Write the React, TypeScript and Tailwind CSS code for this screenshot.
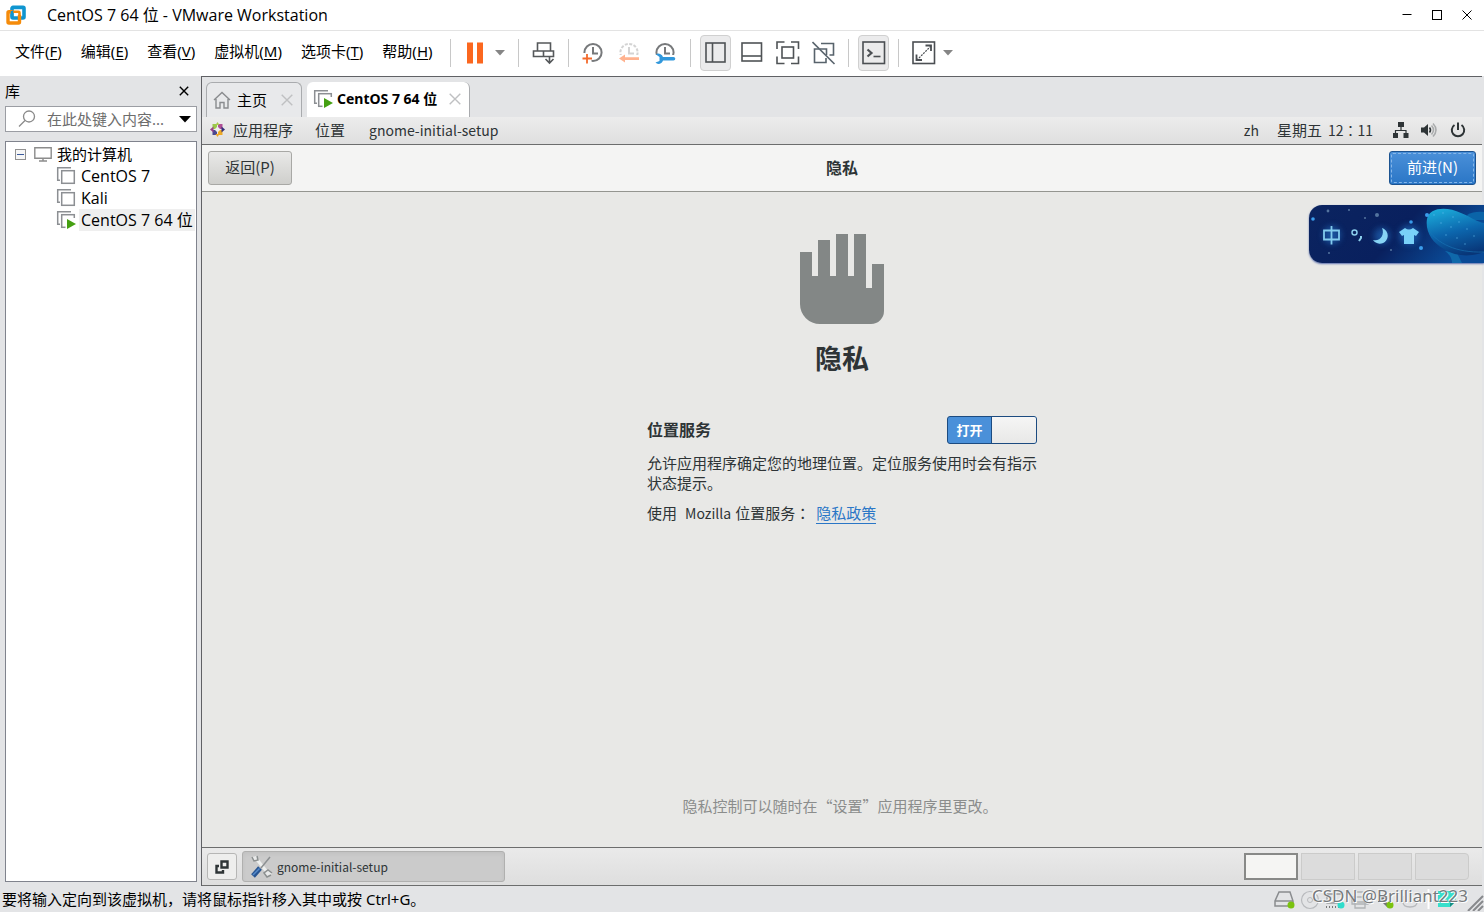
import React, { useState } from "react";

const VmIcon = ({ running = false }: { running?: boolean }) => (
  <svg width="20" height="20" viewBox="0 0 20 20" fill="none" className="shrink-0" aria-hidden="true">
    <path d="M1.7 15V1.7H15M1 14.3h3" stroke="#8c8f93" strokeWidth="1.5" />
    <rect x="5.7" y="4.7" width="12.6" height="12.6" stroke="#8c8f93" strokeWidth="1.5" fill="#fff" />
    {running && (
      <>
        <path d="M9.5 8v12H20V8z" fill="#fff" />
        <path d="M11 9l9 5-9 5z" fill="#45a012" />
      </>
    )}
  </svg>
);

const Caret = () => (
  <svg width="10" height="6" viewBox="0 0 10 6" aria-hidden="true">
    <path d="M0 0h10L5 5.5z" fill="#858585" />
  </svg>
);

const CloseX = ({ color }: { color: string }) => (
  <svg width="12" height="12" viewBox="0 0 12 12" aria-hidden="true">
    <path d="M.7.7l10.6 10.6M11.3.7L.7 11.3" stroke={color} strokeWidth="1.4" />
  </svg>
);

const Separator = () => <span className="h-7 w-px shrink-0 bg-[#c8c8c8]" />;

const menus = [
  ["文件", "F"],
  ["编辑", "E"],
  ["查看", "V"],
  ["虚拟机", "M"],
  ["选项卡", "T"],
  ["帮助", "H"],
];

const ToolButton = ({ label, active = false, children }: { label: string; active?: boolean; children: React.ReactNode }) => (
  <button
    type="button"
    aria-label={label}
    className={
      active
        ? "flex h-9 w-[31px] shrink-0 items-center justify-center rounded border border-[#d0d0d0] bg-[#ebebec]"
        : "flex h-9 w-[31px] shrink-0 items-center justify-center"
    }
  >
    {children}
  </button>
);

const Clock = ({ color, dashed = false }: { color: string; dashed?: boolean }) => (
  <>
    <circle cx="12" cy="11.5" r="8.6" stroke={color} strokeWidth="2" strokeDasharray={dashed ? "3 1.5" : undefined} />
    <path d="M12 6v6.5H17" stroke={color} strokeWidth="2" />
  </>
);

function TitleBar() {
  return (
    <header className="flex h-[31px] shrink-0 items-center border-b border-[#e3e3e3] bg-white">
      <svg width="22" height="22" viewBox="0 0 22 22" fill="none" className="ml-[5px]" aria-hidden="true">
        <path d="M8 3.400h10a1 1 0 011 1V13a1 1 0 01-1 1H8a1 1 0 01-1-1V4.400a1 1 0 011-1z" stroke="#0f95d0" strokeWidth="3.600" />
        <path d="M7 7.700H4a1 1 0 00-1 1V18a1 1 0 001 1h9.500a1 1 0 001-1v-7" stroke="#f58b0a" strokeWidth="3.400" />
        <path d="M7 7.700h6.500a1 1 0 011 1v3" stroke="#f58b0a" strokeWidth="2.600" />
        <path d="M7 7v6" stroke="#0f95d0" strokeWidth="2.600" />
      </svg>
      <h1 className="ml-5 flex-1 font-['Open_Sans','Noto_Sans_CJK_SC',sans-serif] text-[16px] leading-5">CentOS 7 64 位 - VMware Workstation</h1>
      <button type="button" aria-label="最小化" className="flex h-6 w-[30px] items-center justify-center">
        <svg width="10" height="10" viewBox="0 0 10 10"><path d="M.5 4.500h9" stroke="#000" /></svg>
      </button>
      <button type="button" aria-label="最大化" className="flex h-6 w-[30px] items-center justify-center">
        <svg width="10" height="10" viewBox="0 0 10 10" fill="none"><rect x=".5" y=".5" width="9" height="9" stroke="#000" /></svg>
      </button>
      <button type="button" aria-label="关闭" className="mr-[2px] flex h-6 w-[30px] items-center justify-center">
        <svg width="10" height="10" viewBox="0 0 10 10"><path d="M.5.5l9 9M9.500.5l-9 9" stroke="#000" /></svg>
      </button>
    </header>
  );
}

function MenuBar() {
  const frame = "#4f5356";
  return (
    <div className="flex h-[45px] shrink-0 items-center bg-white pb-[2px]">
      <nav className="flex min-w-[450px] shrink-0 gap-[19px] pb-1 pl-[15px] text-[15px] leading-5">
        {menus.map(([name, key]) => (
          <button type="button" key={name} className="whitespace-nowrap">
            {name}(<u className="underline-offset-2">{key}</u>)
          </button>
        ))}
      </nav>
      <Separator />
      <div className="flex items-center gap-[5px] pr-[10px] pl-3">
        <button type="button" aria-label="暂停" className="flex w-6 justify-center">
          <svg width="18" height="22" viewBox="0 0 18 22"><path d="M1 0.500h6v21H1zM11 .5h6v21h-6z" fill="#fb671f" /></svg>
        </button>
        <button type="button" aria-label="电源选项" className="flex w-4 justify-center"><Caret /></button>
      </div>
      <Separator />
      <div className="flex px-[9px]">
        <ToolButton label="发送 Ctrl+Alt+Del">
          <svg width="24" height="24" viewBox="0 0 24 24" fill="none" stroke="#55585a" strokeWidth="1.600">
            <path d="M5.500 2h13v8h-13zM1.500 10h10v5.500h-10zM11.500 10h10v5.500h-10zM17.500 15v7M13.500 18l4 4 4-4" />
          </svg>
        </ToolButton>
      </div>
      <Separator />
      <div className="flex items-center gap-3 pr-[13px] pl-3">
        <button type="button" aria-label="拍摄快照">
          <svg width="24" height="24" viewBox="0 0 24 24" fill="none">
            <Clock color="#77797b" />
            <path d="M1 12h9.500v11H1z" fill="#fff" />
            <path d="M6 13v9.500M1.500 17.500h9.500" stroke="#f36a2c" strokeWidth="1.800" />
          </svg>
        </button>
        <button type="button" aria-label="恢复快照">
          <svg width="24" height="24" viewBox="0 0 24 24" fill="none">
            <Clock color="#d3d3d3" dashed />
            <path d="M0 14h24v10H0z" fill="#fff" />
            <path d="M2 17.500l6-4v2.700h14v2.800H8v2.500z" fill="#ffb28f" />
          </svg>
        </button>
        <button type="button" aria-label="管理快照">
          <svg width="24" height="24" viewBox="0 0 24 24" fill="none">
            <Clock color="#77797b" />
            <path d="M0 14h24v10H0z" fill="#fff" />
            <path d="M3 13.500a4.500 4.500 0 017 2.500h10.500a1.800 1.800 0 010 3.600H10a4.500 4.500 0 01-7.500 2l4-1.500v-4.200z" fill="#3198dc" />
          </svg>
        </button>
      </div>
      <Separator />
      <div className="flex gap-[5px] px-[9px]">
        <ToolButton label="显示库" active>
          <svg width="22" height="22" viewBox="0 0 22 22" fill="none" stroke={frame} strokeWidth="1.600"><rect x="1" y="1" width="19" height="19" /><path d="M7.500 1v19" /></svg>
        </ToolButton>
        <ToolButton label="显示缩略图栏">
          <svg width="22" height="22" viewBox="0 0 22 22" fill="none" stroke={frame} strokeWidth="1.600"><rect x="1" y="1" width="19.500" height="18" /><path d="M1 14h19" /></svg>
        </ToolButton>
        <ToolButton label="全屏">
          <svg width="24" height="24" viewBox="0 0 24 24" fill="none" stroke={frame} strokeWidth="1.600"><rect x="6" y="6" width="11.500" height="11" /><path d="M8.500 1H1v7M15 1h7.500v7M1 15.500v7h7.500M15 22.500h7.500v-7" /></svg>
        </ToolButton>
        <ToolButton label="Unity 模式">
          <svg width="24" height="24" viewBox="0 0 24 24" fill="none" stroke="#58636c" strokeWidth="1.600"><path d="M9 2.500h12.500V14h-4M7 8H2.500v13.500H14V17M8 8h6.500v6" /><path d="M.5 1l22 22" /></svg>
        </ToolButton>
      </div>
      <Separator />
      <div className="flex px-[9px]">
        <ToolButton label="控制台视图" active>
          <svg width="24" height="24" viewBox="0 0 24 24" fill="none" stroke="#4b4f53" strokeWidth="1.600"><rect x="1" y="1" width="21.500" height="21.500" /><path d="M5.500 8.500l4 3.500-4 3.500" strokeWidth="2.200" /><path d="M11.500 15.500h7" /></svg>
        </ToolButton>
      </div>
      <Separator />
      <div className="flex items-center pl-[9px]">
        <ToolButton label="拉伸客户机">
          <svg width="24" height="24" viewBox="0 0 24 24" fill="none" stroke="#4b4f53" strokeWidth="1.600"><rect x="1" y="1" width="21.500" height="21.500" /><path d="M13.500 4.500h5.500V10M4.500 13.500v5.500H10" strokeWidth="1.800" /><path d="M19 5L5 19" strokeWidth="1.200" strokeDasharray="2 1" /></svg>
        </ToolButton>
        <button type="button" aria-label="拉伸选项" className="flex w-[18px] justify-center"><Caret /></button>
      </div>
    </div>
  );
}

function Sidebar() {
  return (
    <aside className="flex w-[201px] shrink-0 flex-col bg-[#e3e4e6] pr-1 pl-[5px] text-[15px]">
      <div className="flex h-[30px] items-center justify-between pr-2">
        <h2 className="leading-5">库</h2>
        <button type="button" aria-label="关闭库">
          <svg width="10" height="10" viewBox="0 0 10 10"><path d="M.8.8l8.400 8.400M9.200.8L.8 9.200" stroke="#000" strokeWidth="1.400" /></svg>
        </button>
      </div>
      <div className="flex h-[26px] items-center border border-[#9b9da3] bg-white">
        <svg width="18" height="18" viewBox="0 0 18 18" fill="none" stroke="#8a8a8a" strokeWidth="1.300" className="ml-3 shrink-0"><circle cx="11" cy="6.500" r="5.500" /><path d="M7 10.500L1 16.500" /></svg>
        <input type="text" aria-label="搜索" placeholder="在此处键入内容..." className="ml-[11px] min-w-0 flex-1 bg-transparent leading-5 outline-none placeholder:text-[#6d6d6d]" />
        <button type="button" aria-label="搜索选项" className="mr-[5px]">
          <svg width="12" height="7" viewBox="0 0 12 7"><path d="M0 0h12L6 6.500z" /></svg>
        </button>
      </div>
      <div className="mt-[9px] mb-1 flex-1 border border-[#80838d] bg-white pt-px">
        <div className="flex h-[22px] items-center pl-[9px]">
          <button type="button" aria-label="折叠" className="flex size-[11px] items-center justify-center border border-[#919191] bg-[#f6f6f6]">
            <span className="h-px w-[7px] bg-[#3a5a9c]" />
          </button>
          <svg width="18" height="15" viewBox="0 0 18 15" fill="none" stroke="#8c8c8c" strokeWidth="1.400" className="mr-[5px] ml-2"><path d="M.8.8h16.400v10.400H.8zM9 11v2.500M5 14h8" /></svg>
          我的计算机
        </div>
        <ul>
          {["CentOS 7", "Kali", "CentOS 7 64 位"].map((name, i) => (
            <li key={name}>
              <button type="button" className="flex h-[22px] items-center pl-[50px] font-['Open_Sans','Noto_Sans_CJK_SC',sans-serif] text-[16px] whitespace-nowrap">
                <VmIcon running={i === 2} />
                <span className={i === 2 ? "ml-[3px] bg-[#efefef] px-[2px] leading-[22px]" : "ml-[3px] px-[2px] leading-[22px]"}>{name}</span>
              </button>
            </li>
          ))}
        </ul>
      </div>
    </aside>
  );
}

function Tabs() {
  return (
    <div className="flex h-10 shrink-0 items-end gap-[5px] bg-[#e3e4e6] pl-1">
      <div className="flex h-[35px] w-24 items-center rounded-t-md border border-b-0 border-[#a9abae] bg-[#e8e9eb] pr-2 pb-px pl-[6px]">
        <svg width="18" height="18" viewBox="0 0 18 18" fill="none" stroke="#898b8e" strokeWidth="1.400"><path d="M1 9l8-7.500L17 9M3 8v9h4v-5.500h4V17h4V8" /></svg>
        <button type="button" className="ml-[6px] flex-1 text-left text-[15px] leading-5">主页</button>
        <button type="button" aria-label="关闭主页"><CloseX color="#bfc0c2" /></button>
      </div>
      <div className="flex h-[35px] w-[163px] items-center rounded-t-md border-r border-[#a9abae] bg-white pr-2 pb-px pl-[6px]">
        <VmIcon running />
        <button type="button" className="ml-1 flex-1 text-left text-[14px] leading-5 font-bold whitespace-nowrap">CentOS 7 64 位</button>
        <button type="button" aria-label="关闭 CentOS 7 64 位"><CloseX color="#bfc0c2" /></button>
      </div>
    </div>
  );
}

function GuestTopBar() {
  return (
    <div className="flex h-7 shrink-0 items-center border-b border-[#6c6d6d] bg-linear-to-b from-[#ececec] to-[#dfdfdf] pb-[2px] pl-2 text-[15px] leading-5 text-[#2e3436]">
      <svg width="15" height="15" viewBox="0 0 15 15" aria-hidden="true">
        <path d="M2.500 2H7v5H2.500z" fill="#9ac84a" /><path d="M8 2h4.500v5H8z" fill="#b04e96" />
        <path d="M8 8h4.500v5H8z" fill="#efaa25" /><path d="M2.500 8H7v5H2.500z" fill="#4a4890" />
        <path d="M0 7.500L3.500 4.500v6z" fill="#9b3f8b" /><path d="M7.500 0l2 3h-4z" fill="#a9c94e" /><path d="M15 7.500l-3.500-3v6z" fill="#35307b" />
        <path d="M7.500 15l-2-3h4z" fill="#eda629" /><path d="M7.500 4.500l3 3-3 3-3-3z" fill="#eee" />
      </svg>
      <button type="button" className="ml-2">应用程序</button>
      <button type="button" className="ml-[22px]">位置</button>
      <button type="button" className="ml-6 text-[14px]">gnome-initial-setup</button>
      <div className="ml-auto flex items-center pr-4">
        <button type="button" className="text-[14px]">zh</button>
        <button type="button" className="mr-5 ml-[18px] flex gap-[6px] whitespace-nowrap">
          <span>星期五</span>
          <span className="font-['Noto_Sans_CJK_TC',sans-serif] text-[14px]">12：11</span>
        </button>
        <svg width="16" height="16" viewBox="0 0 16 16" fill="#2e3436"><path d="M5 0h6v5H5zM0 11h5v5H0zM10.500 11h5v5h-5z" /><path d="M8 5v4M2.500 11V8.500h10.500V11" stroke="#2e3436" fill="none" strokeWidth="1.200" /></svg>
        <svg width="16" height="16" viewBox="0 0 16 16" fill="none" className="ml-3"><path d="M0 5.500h3L7 2v12l-4-3.500H0z" fill="#2e3436" /><path d="M8.500 5.500q2 2.500 0 5" stroke="#2e3436" strokeWidth="1.600" /><path d="M10.500 3.500q4 4.500 0 9M12 1.500q6 6.500 0 13" stroke="#a9abac" strokeWidth="1.500" /></svg>
        <svg width="16" height="16" viewBox="0 0 16 16" fill="none" stroke="#2e3436" strokeWidth="2" className="ml-[13px]"><path d="M4.500 3a6.200 6.200 0 107 0M8 0.500V8" /></svg>
      </div>
    </div>
  );
}

function PrivacyPage() {
  const [located, setLocated] = useState(true);
  return (
    <main className="flex flex-1 flex-col bg-[#e8e8e6] text-[15px] leading-5 text-[#2e3436]">
      <div className="grid h-[47px] shrink-0 grid-cols-3 items-center border-b border-[#949590] bg-[#f4f4f3] px-[6px]">
        <button type="button" className="h-[34px] w-[84px] justify-self-start rounded-[3px] border border-[#a8a8a5] bg-linear-to-b from-[#e9e9e8] to-[#cfcfcc] pb-[2px]">返回(P)</button>
        <h2 className="justify-self-center pb-[2px] text-[16px] font-bold">隐私</h2>
        <button type="button" className="h-[34px] w-[87px] justify-self-end rounded-[3px] border border-[#1c5390] bg-linear-to-b from-[#4a90d9] to-[#2a76c6] p-px text-white">
          <span className="flex h-full items-center justify-center rounded-xs border border-dashed border-[#86b6e8] pb-[2px]">前进(N)</span>
        </button>
      </div>
      <section className="mx-auto mt-[42px] flex w-full max-w-[390px] flex-col">
        <svg width="86" height="90" viewBox="0 0 86 90" className="mx-auto" aria-hidden="true">
          <path d="M1 18h12v24h6V6h12v36h6V0h12v42h6V0h12v54h6V30h12v47a13 13 0 01-13 13H21A20 20 0 011 70z" fill="#838786" />
        </svg>
        <h1 className="mt-[14px] text-center text-[27px] leading-10 font-bold">隐私</h1>
        <div className="mt-[38px] flex h-7 items-center justify-between">
          <span id="location-label" className="pb-[2px] text-[16px] font-bold">位置服务</span>
          <button type="button" role="switch" aria-checked={located} aria-labelledby="location-label" onClick={() => setLocated(!located)} className="flex h-7 w-[90px] overflow-hidden rounded-[3px] border border-[#1c4b80] bg-[#4a90d9] text-[13px] font-bold text-white">
            <span className="flex h-full flex-1 items-center justify-center">打开</span>
            <span className="h-full w-[45px] border-l border-[#1c4b80] bg-linear-to-b from-[#f5f5f5] to-[#e8e8e7]" />
          </button>
        </div>
        <p className="mt-[9px] leading-5">允许应用程序确定您的地理位置。定位服务使用时会有指示状态提示。</p>
        <p className="mt-[10px] flex whitespace-nowrap">
          <span>使用</span>
          <span className="mr-1 ml-2 text-[14px]">Mozilla</span>
          <span>位置服务</span>
          <span className="font-['Noto_Sans_CJK_TC',sans-serif]">：</span>
          <a href="#privacy" className="ml-[6px] border-b border-[#2a76c6] leading-5 text-[#2a76c6]">隐私政策</a>
        </p>
      </section>
      <p className="mt-auto mb-[31px] pr-1 text-center text-[#8b8d8c]">隐私控制可以随时在“设置”应用程序里更改。</p>
    </main>
  );
}

function GuestTaskBar() {
  return (
    <div className="flex h-[39px] shrink-0 items-center border-y border-[#6c6d6d] bg-linear-to-b from-[#eaeaea] to-[#dedede] pl-[5px] text-[#2e3436]">
      <button type="button" aria-label="显示桌面" className="flex h-[27px] w-[30px] items-center justify-center rounded-[3px] border border-[#b6b6b5] bg-[#eeeeed]">
        <svg width="14" height="14" viewBox="0 0 14 14" fill="none" stroke="#2e3436" strokeWidth="2.400"><path d="M6.500 1.500h6v6h-6zM4 6H1.500v6.500H8V10" /></svg>
      </button>
      <button type="button" className="ml-[5px] flex h-[31px] w-[263px] items-center rounded-[3px] border border-[#b0b0af] bg-[#cbcbcb] pl-[7px] text-[12px] leading-5 shadow-inner">
        <svg width="23" height="23" viewBox="0 0 23 23" fill="none">
          <path d="M5 2l12 15" stroke="#eef0ef" strokeWidth="3" /><path d="M2 2l2 4 4-1-1-4M21 20l-4 2-3-4 4-3 4 3" stroke="#8c9090" strokeWidth="1.500" fill="#e9eaea" />
          <path d="M20 2l-9 11" stroke="#8c9092" strokeWidth="1.500" /><path d="M10 13l-7 8" stroke="#285592" strokeWidth="5" /><path d="M9.500 13.500L3 20" stroke="#568ccc" strokeWidth="1.500" />
        </svg>
        <span className="ml-1">gnome-initial-setup</span>
      </button>
      <div className="ml-auto flex gap-[3px] pr-[13px]">
        <button type="button" aria-label="工作区 1" className="h-[27px] w-[54px] border-2 border-[#888987] bg-[#f5f5f3]" />
        <button type="button" aria-label="工作区 2" className="h-[27px] w-[54px] border border-[#cbcbca] bg-[#dcdcdc]" />
        <button type="button" aria-label="工作区 3" className="h-[27px] w-[54px] border border-[#cbcbca] bg-[#dcdcdc]" />
        <button type="button" aria-label="工作区 4" className="h-[27px] w-[54px] rounded-r border border-[#cbcbca] bg-[#dcdcdc]" />
      </div>
    </div>
  );
}

function StatusBar() {
  return (
    <footer className="relative flex h-[26px] shrink-0 items-center justify-between bg-[#e3e4e6] pl-[2px]">
      <p className="text-[15px] leading-5">要将输入定向到该虚拟机，请将鼠标指针移入其中或按 Ctrl+G。</p>
      <svg width="212" height="24" viewBox="0 0 212 24" fill="none" aria-hidden="true">
        <path d="M7 5h11l3 9v5H3v-5zM3 14h18" stroke="#8a8c8f" strokeWidth="1.500" />
        <circle cx="19" cy="18" r="3.500" fill="#7ac20f" />
        <circle cx="38" cy="13" r="8.500" stroke="#b8babd" strokeWidth="1.200" /><circle cx="38" cy="13" r="2.500" stroke="#b8babd" />
        <path d="M55 7h15v9H55z" stroke="#9a9c9f" strokeWidth="1.300" /><path d="M54 20h16" stroke="#777" strokeDasharray="1 2" strokeWidth="2" />
        <circle cx="69" cy="18" r="3.500" fill="#2fdccb" />
        <path d="M83 10V5h10v5M80 10h16v7H80zM83 15h10v6H83z" stroke="#b0b2b5" strokeWidth="1.300" />
        <path d="M106 10h4l5-5v15l-5-5h-4z" fill="#727477" /><circle cx="118" cy="18" r="3.500" fill="#7ac20f" />
        <path d="M131 9v6q0 5 7 5t7-5V9" stroke="#b7b9bc" strokeWidth="1.400" />
        <path d="M156.500 2v20" stroke="#fff" strokeWidth="2" />
        <path d="M166 4h18v10l-6 6h-12z" fill="#37dfcb" /><path d="M184 14h-6v6z" fill="#168e83" />
        <path d="M196 24l15-15M201 24l10-10M206 24l5-5" stroke="#87898c" strokeWidth="2" />
      </svg>
      <span className="absolute top-0 right-4 text-[17px] leading-5 text-[#777a7d] [text-shadow:1px_1px_0_#fff,-1px_-1px_0_#f4f4f4]">CSDN @Brilliant223</span>
    </footer>
  );
}

function ImeBar() {
  return (
    <div className="absolute top-[205px] right-0 overflow-hidden rounded-l-[13px] shadow-[0_1px_2px_#5b6fae]">
      <svg width="175" height="58" viewBox="0 0 175 58" aria-label="输入法">
        <defs>
          <linearGradient id="sea" x1="0" x2="1" y2="0.300"><stop stopColor="#0b2460" /><stop offset=".6" stopColor="#09205e" /><stop offset="1" stopColor="#0a4a96" /></linearGradient>
          <linearGradient id="whale" x1="0.300" y1="0" x2=".6" y2="1"><stop stopColor="#1ba9d8" /><stop offset=".5" stopColor="#0c66ad" /><stop offset="1" stopColor="#083678" /></linearGradient>
          <filter id="glow" x="-50%" y="-50%" width="200%" height="200%"><feGaussianBlur stdDeviation="3" /></filter>
        </defs>
        <path d="M0 0h175v58H0z" fill="url(#sea)" />
        <path d="M158 10q7-4 17-3v8h-14z" fill="#0a64a8" />
        <path d="M136 46l12 2 5 10h-10q0-7-7-12z" fill="#0f68aa" />
        <path d="M118 14c2-12 20-13 34-6 10 4 16 9 23 10v29c-12 5-28 5-40-3-12-6-19-18-17-30z" fill="url(#whale)" />
        <path d="M120 26c9 12 26 22 55 21" stroke="#1a78b8" fill="none" opacity=".6" />
        <g fill="#67bff0" opacity=".6">
          {[[125, 10], [134, 8], [144, 12], [132, 18], [142, 22], [150, 17], [158, 24], [137, 30], [148, 33], [165, 31], [156, 39]].map(([x, y]) => <circle key={x} cx={x} cy={y} r=".8" />)}
        </g>
        <g fill="#3b9eed"><circle cx="4" cy="14" r="1.800" /><circle cx="102" cy="17" r="1.800" /><circle cx="112" cy="43" r="2" /><circle cx="118" cy="10" r="2" /></g>
        <g fill="#54749f"><circle cx="19" cy="6" r="1.400" /><circle cx="68" cy="10" r="2" /><circle cx="40" cy="5" r="1" /><circle cx="56" cy="13" r="1" /><circle cx="20" cy="48" r="1" /><circle cx="82" cy="45" r="1" /></g>
        <g fill="#2678ce" opacity=".55" filter="url(#glow)"><circle cx="23" cy="30" r="9" /><circle cx="73" cy="31" r="8" /><circle cx="100" cy="30" r="10" /></g>
        <path d="M15 25.500h15v9H15zM22.500 21v18.500" fill="none" stroke="#83cbee" strokeWidth="1.800" />
        <circle cx="45.500" cy="27.500" r="2.500" fill="none" stroke="#8bcdec" strokeWidth="1.500" /><path d="M52 31v2l-2 3" stroke="#8bcdec" strokeWidth="2" fill="none" />
        <path d="M73 23a8 8 0 11-9 12c7 2 12-5 9-12z" fill="#87d4f5" />
        <path d="M90 27l6-4q4 3 8 0l6 4-3 4-2-1v9H95v-9l-2 1z" fill="#79d1f8" />
      </svg>
    </div>
  );
}

export default function App() {
  return (
    <div className="relative flex min-h-screen flex-col bg-[#e3e4e6] font-['Noto_Sans','Noto_Sans_CJK_SC',sans-serif] text-black">
      <TitleBar />
      <MenuBar />
      <div className="flex flex-1">
        <Sidebar />
        <div className="mr-[2px] flex min-w-0 flex-1 flex-col border-t border-l border-[#606165]">
          <Tabs />
          <div className="flex flex-1 flex-col font-['Noto_Sans_CJK_SC',sans-serif]">
            <GuestTopBar />
            <PrivacyPage />
            <GuestTaskBar />
          </div>
        </div>
      </div>
      <StatusBar />
      <ImeBar />
    </div>
  );
}
